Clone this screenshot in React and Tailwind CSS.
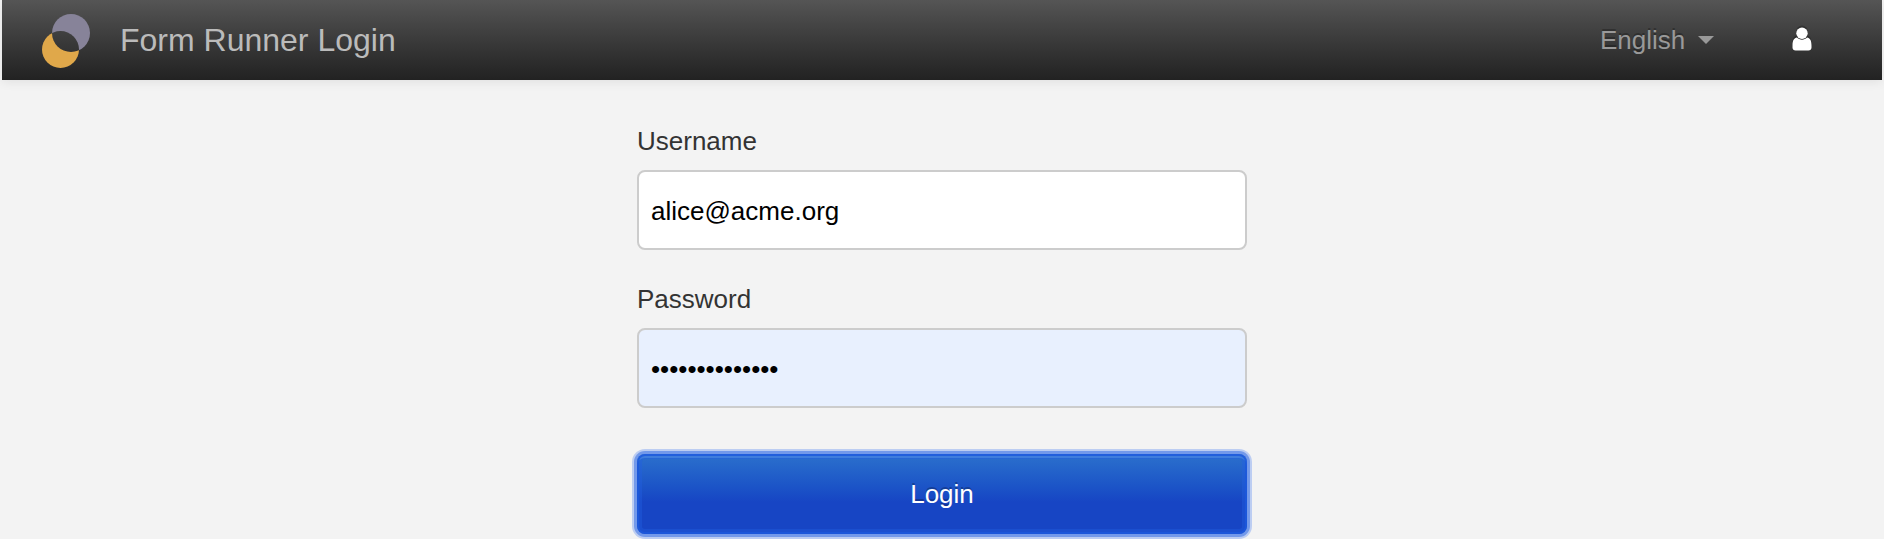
function Logo() {
  return (
    <svg viewBox="0 0 48 56" className="h-14 w-12" role="img" aria-label="Orbeon Forms">
      <defs>
        <mask id="lens">
          <rect width="48" height="56" fill="white" />
          <circle cx="18.5" cy="37.5" r="18.5" fill="black" />
        </mask>
        <mask id="crescent">
          <rect width="48" height="56" fill="white" />
          <circle cx="29" cy="21" r="19" fill="black" />
        </mask>
      </defs>
      <circle cx="29" cy="21" r="19" fill="#878399" mask="url(#lens)" />
      <circle cx="18.5" cy="37.5" r="18.5" fill="#e0a84a" mask="url(#crescent)" />
    </svg>
  );
}

function UserIcon() {
  return (
    <svg viewBox="0 0 20 26" className="h-[26px] w-5" fill="white" aria-hidden="true">
      <circle cx="10" cy="6.2" r="5.7" />
      <path d="M5 10.600C2 11 .5 13.600 .5 18.500V20.500C.5 22.500 1.800 23.500 3.600 23.500H16.400C18.200 23.500 19.500 22.500 19.500 20.500V18.500C19.500 13.600 18 11 15 10.600C13.600 12 12 12.700 10 12.700S6.400 12 5 10.600Z" />
    </svg>
  );
}

function Field({ id, label, type, value, fill }) {
  return (
    <div className="mb-[29px]">
      <label htmlFor={id} className="mb-[9px] block leading-10 text-[#333]">
        {label}
      </label>
      <input
        id={id}
        name={id}
        type={type}
        defaultValue={value}
        className={`block h-20 w-full rounded-lg border-2 border-[#ccc] px-3 pt-0.5 text-black outline-none ${fill}`}
      />
    </div>
  );
}

export default function App() {
  return (
    <div className="min-h-screen bg-[#f3f3f3] font-['Liberation_Sans',Arial,sans-serif] text-[26px]">
      <header className="mx-0.5 flex h-20 items-center bg-linear-to-b from-[#555] to-[#222] pr-[70px] pl-10 shadow-[0_2px_10px_rgba(0,0,0,0.08)]">
        <Logo />
        <h1 className="ml-[30px] text-[32px] leading-10 text-[#bbb]">Form Runner Login</h1>
        <div className="ml-auto flex items-center text-[#999]">
          <select
            aria-label="Language"
            defaultValue="en"
            className="appearance-none bg-transparent leading-10 outline-none text-shadow-[0_-2px_0_rgba(0,0,0,0.25)]"
          >
            <option value="en">English</option>
          </select>
          <svg viewBox="0 0 16 8" className="ml-3 h-2 w-4" fill="currentColor" aria-hidden="true">
            <path d="M0 0H16L8 8Z" />
          </svg>
        </div>
        <button type="button" aria-label="User menu" className="ml-[78px] drop-shadow-[0_-2px_0_rgba(0,0,0,0.25)]">
          <UserIcon />
        </button>
      </header>
      <main className="mx-auto w-full max-w-[610px] pt-[41px]">
        <form onSubmit={(event) => event.preventDefault()}>
          <Field id="username" label="Username" type="text" value="alice@acme.org" fill="bg-white" />
          <Field id="password" label="Password" type="password" value="wonderland1234" fill="bg-[#e8f0fe]" />
          <button
            type="submit"
            className="mt-[46px] block h-20 w-full rounded-lg bg-linear-to-b from-[#2a6dcc] from-5% to-[#1745c4] to-60% leading-10 text-white shadow-[inset_0_0_0_2px_rgba(28,88,220,0.8),inset_0_4px_0_rgba(80,140,225,0.6),inset_0_0_0_5px_rgba(35,95,225,0.4),0_0_0_3px_#7399ea,0_0_0_5px_#bccdf2] text-shadow-[0_-2px_0_rgba(0,0,0,0.25)]"
          >
            Login
          </button>
        </form>
      </main>
    </div>
  );
}
